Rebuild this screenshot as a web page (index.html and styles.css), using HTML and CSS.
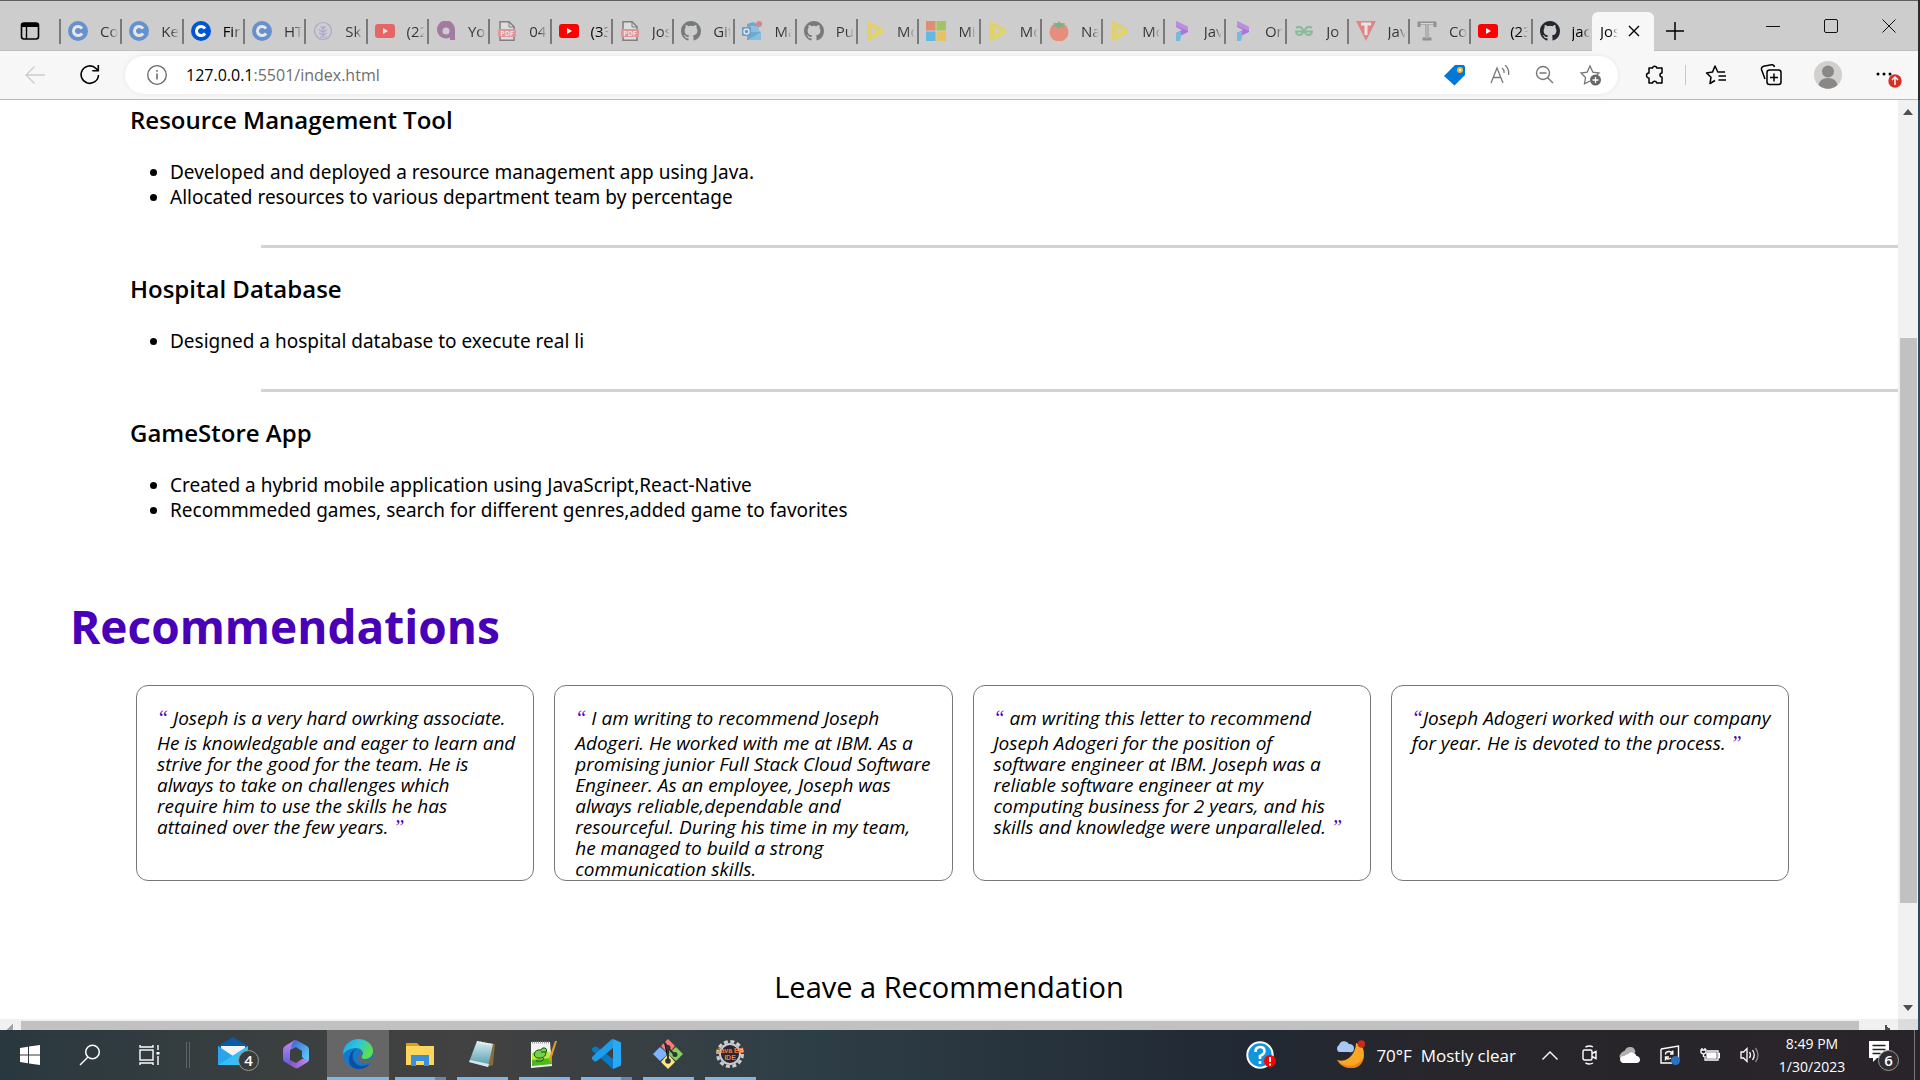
FILE: index.html
```html
<!DOCTYPE html>
<html lang="en">
<head>
<meta charset="utf-8">
<title>Joseph Adogeri</title>
<link rel="stylesheet" href="styles.css">
</head>
<body>
<svg class="defs" aria-hidden="true">
  <defs>
    <symbol id="i-c" viewBox="0 0 20 20"><circle cx="10" cy="10" r="10" fill="#0056d2"/><path d="M14 7.6A4.6 4.6 0 1 0 14 12.4" fill="none" stroke="#fff" stroke-width="3"/></symbol>
    <symbol id="i-tree" viewBox="0 0 20 20" fill="none" stroke="#8f7fd0"><circle cx="10" cy="10" r="8.5" stroke-width="1.2"/><path d="M10 16V5M10 8L7.500 5.500M10 8l2.500-2.500M10 11.500L6 8.500M10 11.500l4-3M10 14l-4-2M10 14l4-2M7 16h6" stroke-width="1.200"/></symbol>
    <symbol id="i-yt" viewBox="0 0 20 20"><rect y="3" width="20" height="14" rx="3" fill="#f00"/><path d="M8 7l5 3-5 3z" fill="#fff"/></symbol>
    <symbol id="i-a" viewBox="0 0 20 20"><path d="M19 19h-5v-2.500A9 9 0 1 1 19 9z" fill="#7a2a78"/><circle cx="10" cy="10" r="3.500" fill="#ccc"/></symbol>
    <symbol id="i-pdf" viewBox="0 0 20 20"><path d="M3 .8h9l5 5V19.200H3z" fill="#eee" stroke="#333" stroke-width="1.500"/><path d="M12 1v5h5" fill="none" stroke="#333"/><rect x="1" y="8" width="18" height="8" rx="1.500" fill="#f0606a"/><text x="10" y="14.500" class="pdf">PDF</text></symbol>
    <symbol id="i-gh" viewBox="0 0 16 16"><path fill="#24292f" d="M8 0C3.580 0 0 3.580 0 8c0 3.540 2.290 6.530 5.470 7.590.4.070.550-.170.550-.380 0-.190-.010-.820-.010-1.490-2.010.370-2.530-.490-2.690-.940-.090-.230-.480-.940-.820-1.130-.280-.150-.680-.520-.010-.530.630-.010 1.080.580 1.230.820.720 1.210 1.870.870 2.330.660.070-.520.280-.870.510-1.070-1.780-.200-3.640-.890-3.640-3.950 0-.870.310-1.590.820-2.150-.080-.200-.360-1.020.080-2.120 0 0 .670-.210 2.200.820a7.600 7.600 0 0 1 4 0c1.530-1.040 2.200-.820 2.200-.820.440 1.100.160 1.920.080 2.120.510.560.820 1.270.820 2.150 0 3.070-1.870 3.750-3.650 3.950.290.250.540.730.540 1.480 0 1.070-.010 1.930-.010 2.200 0 .210.150.460.550.380A8 8 0 0 0 16 8c0-4.420-3.580-8-8-8z"/></symbol>
    <symbol id="i-out" viewBox="0 0 20 20"><path d="M5 3l6-2 6 3v6l2 1v8H5z" fill="#1784d8"/><path d="M8 5h9v6H8z" fill="#50b0f0"/><path d="M6 19l13-8v8z" fill="#35b8f1"/><rect y="6" width="9" height="9" rx="1" fill="#0f6cbd"/><circle cx="4.500" cy="10.500" r="2.500" fill="none" stroke="#fff" stroke-width="1.400"/><circle cx="17" cy="3" r="3" fill="#e0404a"/></symbol>
    <symbol id="i-d" viewBox="0 0 20 20"><path fill-rule="evenodd" d="M2 0l5 2 11 6v4L7 18l-5 2zM7 6v8l6-4z" fill="#f4d415"/><path d="M2 20l5-6 6-4 5-2v4L7 18z" fill="#f0e000"/></symbol>
    <symbol id="i-ms" viewBox="0 0 20 20"><path d="M0 0h9.500v9.500H0z" fill="#f25022"/><path d="M10.500 0H20v9.500h-9.500z" fill="#7fba00"/><path d="M0 10.500h9.500V20H0z" fill="#00a4ef"/><path d="M10.500 10.500H20V20h-9.500z" fill="#ffb900"/></symbol>
    <symbol id="i-tom" viewBox="0 0 20 20"><circle cx="10" cy="11" r="9.500" fill="#ff4f2e"/><path d="M10 0l1.500 2.500 5-.5-3 2 2 2.500-4-1L9 8 7.500 5.500 3 6l3-2.500L4 1.500l4.500 1z" fill="#1f9d45"/></symbol>
    <symbol id="i-p" viewBox="0 0 20 20"><path d="M4 0l12 6v5L4 17v-5l6-3-6-3z" fill="#8a1ee8"/><path d="M4 0l12 6v4L4 5z" fill="#aa50f5"/><path d="M4 12l5-2v6l-1 4H4z" fill="#25a9f0"/></symbol>
    <symbol id="i-gfg" viewBox="0 0 20 20" fill="none" stroke="#45a860" stroke-width="2"><path d="M2 6.500C7 5 9 7 9 10.500a3.500 3.500 0 0 1-7 0h16a3.500 3.500 0 0 1-7 0C11 7 13 5 18 6.500"/></symbol>
    <symbol id="i-tri" viewBox="0 0 20 20"><path d="M0 0h20L10 20z" fill="#fa3e3e"/><path d="M5 3h10M10 3v11" stroke="#fff" stroke-width="3"/></symbol>
    <symbol id="i-t" viewBox="0 0 20 20"><path d="M2 6V2h16v4M10 2v16M5.500 18h9" fill="none" stroke="#555" stroke-width="3"/><path d="M3.500 2.500h13M10 3v14.500" stroke="#ddd"/></symbol>
  </defs>
</svg>

<header class="chrome">
  <div class="tabs">
    <button class="icon-btn tabmenu" aria-label="Tab actions"><svg width="20" height="20" viewBox="0 0 20 20"><rect x="1.500" y="2" width="17" height="16" rx="2.500" fill="none" stroke="#000" stroke-width="1.600"/><path d="M1.500 2h17v4h-17z"/><path d="M6.500 5v13" stroke="#000" stroke-width="1.400"/></svg></button>
    <nav class="tablist">
      <a href="#" class="tab"><svg><use href="#i-c"/></svg><span>Co</span></a>
      <a href="#" class="tab"><svg><use href="#i-c"/></svg><span>Ke</span></a>
      <a href="#" class="tab awake"><svg><use href="#i-c"/></svg><span>Fir</span></a>
      <a href="#" class="tab"><svg><use href="#i-c"/></svg><span>HT</span></a>
      <a href="#" class="tab"><svg><use href="#i-tree"/></svg><span>Sk</span></a>
      <a href="#" class="tab"><svg><use href="#i-yt"/></svg><span>(22</span></a>
      <a href="#" class="tab"><svg><use href="#i-a"/></svg><span>Yo</span></a>
      <a href="#" class="tab"><svg><use href="#i-pdf"/></svg><span>04</span></a>
      <a href="#" class="tab awake"><svg><use href="#i-yt"/></svg><span>(33</span></a>
      <a href="#" class="tab"><svg><use href="#i-pdf"/></svg><span>Jos</span></a>
      <a href="#" class="tab"><svg><use href="#i-gh"/></svg><span>Git</span></a>
      <a href="#" class="tab"><svg><use href="#i-out"/></svg><span>Ma</span></a>
      <a href="#" class="tab"><svg><use href="#i-gh"/></svg><span>Pu</span></a>
      <a href="#" class="tab"><svg><use href="#i-d"/></svg><span>Mo</span></a>
      <a href="#" class="tab"><svg><use href="#i-ms"/></svg><span>Mi</span></a>
      <a href="#" class="tab"><svg><use href="#i-d"/></svg><span>Mo</span></a>
      <a href="#" class="tab"><svg><use href="#i-tom"/></svg><span>Na</span></a>
      <a href="#" class="tab"><svg><use href="#i-d"/></svg><span>Mo</span></a>
      <a href="#" class="tab"><svg><use href="#i-p"/></svg><span>Jav</span></a>
      <a href="#" class="tab"><svg><use href="#i-p"/></svg><span>On</span></a>
      <a href="#" class="tab"><svg><use href="#i-gfg"/></svg><span>Jo</span></a>
      <a href="#" class="tab"><svg><use href="#i-tri"/></svg><span>Jav</span></a>
      <a href="#" class="tab"><svg><use href="#i-t"/></svg><span>Co</span></a>
      <a href="#" class="tab awake"><svg><use href="#i-yt"/></svg><span>(23</span></a>
      <a href="#" class="tab awake"><svg><use href="#i-gh"/></svg><span>jac</span></a>
    </nav>
    <div class="tab-active"><span>Jos</span><button class="icon-btn" aria-label="Close tab"><svg width="12" height="12" viewBox="0 0 12 12"><path d="M1 1l10 10M11 1L1 11" stroke="#000" stroke-width="1.400"/></svg></button></div>
    <button class="icon-btn newtab" aria-label="New tab"><svg width="18" height="18" viewBox="0 0 18 18"><path d="M9 0v18M0 9h18" stroke="#000" stroke-width="1.500"/></svg></button>
    <div class="wincontrols">
      <button class="icon-btn" aria-label="Minimize"><svg width="14" height="14" viewBox="0 0 14 14"><path d="M0 7.500h14" stroke="#111"/></svg></button>
      <button class="icon-btn" aria-label="Maximize"><svg width="14" height="14" viewBox="0 0 14 14"><rect x=".5" y=".5" width="13" height="13" rx="1.500" fill="none" stroke="#111"/></svg></button>
      <button class="icon-btn" aria-label="Close"><svg width="14" height="14" viewBox="0 0 14 14"><path d="M.5.500l13 13M13.500.500l-13 13" stroke="#111"/></svg></button>
    </div>
  </div>

  <div class="toolbar">
    <button class="icon-btn back" aria-label="Back"><svg width="20" height="18" viewBox="0 0 20 18" fill="none" stroke="#ccc" stroke-width="1.300"><path d="M20 9H1M9.500.500L1 9l8.500 8.500"/></svg></button>
    <button class="icon-btn reload" aria-label="Refresh"><svg width="20" height="20" viewBox="0 0 20 20" fill="none" stroke="#000" stroke-width="1.600"><path d="M18.500 10a8.700 8.700 0 1 1-2.500-6.500L18 5.500M18.300 0v5.700h-6"/></svg></button>
    <div class="omnibox">
      <svg width="20" height="20" viewBox="0 0 20 20" fill="none" stroke="#666" stroke-width="1.300"><circle cx="10" cy="10" r="9.300"/><path d="M10 8.500v6M10 5v1.700" stroke-width="1.500"/></svg>
      <a class="url" href="#"><b>127.0.0.1</b>:5501/index.html</a>
      <button class="icon-btn" aria-label="Shopping"><svg width="22" height="22" viewBox="0 0 22 22"><path d="M11 1h8.500L21 2.500V11L10.500 21.500 0 12z" fill="#0078d7"/><circle cx="16" cy="6" r="3" fill="#f5b82e"/><circle cx="16" cy="6" r="1.200" fill="#fff"/></svg></button>
      <button class="icon-btn" aria-label="Read aloud"><svg width="20" height="20" viewBox="0 0 20 20" fill="none" stroke="#777" stroke-width="1.300"><path d="M1 18L7 3l6 15M3.300 12.500h7.400M12 3q2.500 2 2 5M15 0q4.500 4 3.500 10"/></svg></button>
      <button class="icon-btn" aria-label="Zoom out"><svg width="20" height="20" viewBox="0 0 20 20" fill="none" stroke="#777" stroke-width="1.400"><circle cx="8" cy="8" r="6.500"/><path d="M4.500 8h7M12.700 12.700L18 18"/></svg></button>
      <button class="icon-btn" aria-label="Add to favorites"><svg width="22" height="22" viewBox="0 0 22 22" fill="none" stroke="#777" stroke-width="1.300"><path d="M11 17l-5.500 2.800 1-6.300L2 9l6.200-.9L11 2l2.800 6.100L20 9l-2 2"/><circle cx="16.500" cy="16" r="5.500" fill="#666" stroke="none"/><path d="M16.500 13v6M13.500 16h6" stroke="#fff"/></svg></button>
    </div>
    <button class="icon-btn ext" aria-label="Extensions"><svg width="20" height="20" viewBox="0 0 20 20" fill="none" stroke="#000" stroke-width="1.500"><path d="M4 3h3.500a2.200 2.200 0 0 1 4.300 0H17v5a2 2 0 0 0 0 4v6h-5.200a2.200 2.200 0 0 0-4.300 0H4v-5a2.300 2.300 0 1 1 0-5z" stroke-linejoin="round"/></svg></button>
    <i class="sep"></i>
    <button class="icon-btn fav" aria-label="Favorites"><svg width="22" height="20" viewBox="0 0 22 20" fill="none" stroke="#000" stroke-width="1.500" stroke-linejoin="round"><path d="M10 15.500L5 18.500l1-6.300L1.500 8l6-.9L10 1l2.800 6H20M13.500 11H21M13.500 15H21"/></svg></button>
    <button class="icon-btn coll" aria-label="Collections"><svg width="22" height="22" viewBox="0 0 22 22" fill="none" stroke="#000" stroke-width="1.500"><path d="M5 15L1.500 5.500Q1 3 3.500 2.200l8-1.400Q14 .5 14.500 3"/><rect x="7" y="6" width="14" height="14.500" rx="2.500"/><path d="M14 9.500v8M10 13.500h8"/></svg></button>
    <button class="icon-btn prof" aria-label="Profile"><svg width="28" height="28" viewBox="0 0 28 28"><circle cx="14" cy="14" r="14" fill="#d2d0ce"/><circle cx="14" cy="10.500" r="6" fill="#8a8886"/><path d="M4.500 24q1.500-7 9.500-7t9.500 7Q14 31.500 4.500 24z" fill="#8a8886"/></svg></button>
    <button class="icon-btn more" aria-label="Settings and more"><svg width="28" height="28" viewBox="0 0 28 28"><circle cx="3" cy="13" r="1.500"/><circle cx="9" cy="13" r="1.500"/><circle cx="15" cy="13" r="1.500"/><circle cx="20" cy="20" r="6.700" fill="#d93025"/><path d="M20 24v-7.500M17 19l3-3 3 3" fill="none" stroke="#fff" stroke-width="1.400"/></svg></button>
  </div>
</header>

<div class="view">
  <main class="page">
    <section class="projects">
      <h3>Resource Management Tool</h3>
      <ul><li>Developed and deployed a resource management app using Java.</li><li>Allocated resources to various department team by percentage</li></ul>
      <hr>
      <h3>Hospital Database</h3>
      <ul><li>Designed a hospital database to execute real li</li></ul>
      <hr>
      <h3>GameStore App</h3>
      <ul><li>Created a hybrid mobile application using JavaScript,React-Native</li><li>Recommmeded games, search for different genres,added game to favorites</li></ul>
    </section>
    <h1>Recommendations</h1>
    <section class="cards">
      <p class="card"><span class="open">“</span> Joseph is a very hard owrking associate.<br>He is knowledgable and eager to learn and<br>strive for the good for the team. He is<br>always to take on challenges which<br>require him to use the skills he has<br>attained over the few years. <span class="close">”</span></p>
      <p class="card"><span class="open">“</span> I am writing to recommend Joseph<br>Adogeri. He worked with me at IBM. As a<br>promising junior Full Stack Cloud Software<br>Engineer. As an employee, Joseph was<br>always reliable,dependable and<br>resourceful. During his time in my team,<br>he managed to build a strong<br>communication skills.</p>
      <p class="card"><span class="open">“</span> am writing this letter to recommend<br>Joseph Adogeri for the position of<br>software engineer at IBM. Joseph was a<br>reliable software engineer at my<br>computing business for 2 years, and his<br>skills and knowledge were unparalleled. <span class="close">”</span></p>
      <p class="card"><span class="open">“</span>Joseph Adogeri worked with our company<br>for year. He is devoted to the process. <span class="close">”</span></p>
    </section>
    <h2>Leave a Recommendation</h2>
  </main>
  <div class="vbar"><i class="up"></i><i class="vthumb"></i><i class="down"></i></div>
  <div class="hbar"><i class="left"></i><i class="hthumb"></i><i class="right"></i></div>
  <div class="corner"></div>
</div>

<footer class="taskbar">
  <button class="sys" aria-label="Start"><svg width="20" height="20" viewBox="0 0 20 20" fill="#fff"><path d="M0 3l8-1.200v7.700H0zM9 1.600L20 0v9.500H9zM0 10.500h8v7.700L0 17zM9 10.500h11V20L9 18.400z"/></svg></button>
  <button class="sys" aria-label="Search"><svg width="22" height="22" viewBox="0 0 22 22" fill="none" stroke="#fff" stroke-width="1.500"><circle cx="13.500" cy="8" r="6.800"/><path d="M9 13L1 21"/></svg></button>
  <button class="sys" aria-label="Task view"><svg width="22" height="20" viewBox="0 0 22 20" fill="none" stroke="#fff" stroke-width="1.400"><rect x="1" y="5" width="13" height="10"/><path d="M1 0v2h13V0M1 20v-2h13v2M19 0v5M19 11v9"/><path d="M17.500 7h3v2.500h-3z" fill="#fff" stroke="none"/></svg></button>
  <i class="divider"></i>
  <button class="app mail" aria-label="Mail"><svg width="42" height="36" viewBox="0 0 42 36"><path d="M1 10L16 1l15 9v19H1z" fill="#0c59a4"/><path d="M4 10h24v12H4z" fill="#f3f3f3"/><path d="M1 10l15 10L31 10v19H1z" fill="#2aa5ec"/><path d="M1 29L31 10v19z" fill="#35c0f5"/><circle cx="31.500" cy="24.500" r="10" fill="#3b3b3b" stroke="#999"/><text x="31.500" y="29.500" class="badge">4</text></svg></button>
  <button class="app idle" aria-label="Microsoft 365"><svg width="28" height="30" viewBox="0 0 28 30"><defs><linearGradient id="m1" x1="0" y1="0" x2="0" y2="1"><stop offset="0" stop-color="#c58af0"/><stop offset="1" stop-color="#5a5fd8"/></linearGradient><linearGradient id="m2" x1="0" y1="0" x2="1" y2="1"><stop offset="0" stop-color="#3f62d0"/><stop offset="1" stop-color="#5ad8fb"/></linearGradient><linearGradient id="m3" x1="0" y1="0" x2="1" y2="0"><stop offset="0" stop-color="#7b50b8"/><stop offset="1" stop-color="#c58af0"/></linearGradient></defs><path d="M13 1L3 7Q1 8.500 1 11v9q0 2 2 3l5 3V12q0-1.500 2-2.500l4-2.500z" fill="url(#m1)"/><path d="M12 2q2-1.500 4 0l9 5q2 1 2 4v9q0 2-2 3l-5-5v-6l-6-4-4 2q-2-4 2-8z" fill="url(#m2)"/><path d="M6 25l7 4q1.500.700 3 0l9-5.500q2-1.500 2-3.500H20l-6 4-6-3q-1 3-2 4z" fill="url(#m3)"/></svg></button>
  <button class="app current" aria-label="Microsoft Edge"><svg width="30" height="30" viewBox="0 0 30 30"><defs><linearGradient id="eg" x1="0" y1="0" x2="1" y2=".5"><stop offset="0" stop-color="#1a9fe8"/><stop offset=".5" stop-color="#30c5d8"/><stop offset="1" stop-color="#60e048"/></linearGradient></defs><circle cx="15" cy="15" r="15" fill="#1379cf"/><path d="M0 14C1 5 8 0 15 0c9 0 15 6 15 12 0 5-4 8-8 8-3 0-4-2-3-3 3-4-1-8-6-8C6 9 1 13 0 16z" fill="url(#eg)"/><path d="M14 9.500C8 13 8 22 15 26c5 2 10 0 12-2-4 7-14 8-19 3C4 22 6 12 14 9.500z" fill="#0e4f9c"/><path d="M18 12c3 3-1 4 0 7 2 3 7 3 10 .500 1 1 0 3-1 4-7 4-13-1-12-6 .5-2 2-3 3-5.500z" fill="#666"/></svg></button>
  <button class="app multi" aria-label="File Explorer"><svg width="28" height="24" viewBox="0 0 28 24"><path d="M0 1h11l3 3v4H0z" fill="#e59b12"/><path d="M0 4h28v19H0z" fill="#ffd65c"/><path d="M5 24V13h18v11h-5v-5h-8v5z" fill="#3b90dc"/></svg></button>
  <button class="app" aria-label="Notepad"><svg width="28" height="28" viewBox="0 0 28 28"><defs><linearGradient id="np" x1="0" y1="0" x2="0" y2="1"><stop offset="0" stop-color="#d8f0f2"/><stop offset="1" stop-color="#4f96a8"/></linearGradient></defs><path d="M23 3l4 1-2 21-6 2z" fill="#8a6a3a"/><path d="M9 1l16 3-5 23L1 22z" fill="url(#np)"/><path d="M1 22l19 5 1-3L2 20z" fill="#d8e6ea"/><path d="M9 2l15 3" stroke="#eee" stroke-width="2" stroke-dasharray="2 1"/></svg></button>
  <button class="app" aria-label="Notepad++"><svg width="28" height="28" viewBox="0 0 28 28"><path d="M1 2h19l2 24-21 2z" fill="#f2f2f2"/><path d="M2 13q9-4 18-1l1 12-19 2z" fill="#b8ec3a"/><path d="M2 20l19-2 1 6-20 2z" fill="#4fb81f"/><path d="M4 14q2-5 7-4 1-3 4-2t1 4q0 5-5 6-6 1-7-4zM6 21h6l2-3M11 12h5" fill="#74d147" stroke="#174a17" stroke-width="1"/><path d="M2 2.500h18" stroke="#999" stroke-width="2" stroke-dasharray="1 1"/><path d="M27 1l-6 19-2 2v-4L25 1z" fill="#e89b24"/></svg></button>
  <button class="app multi" aria-label="Visual Studio Code"><svg width="30" height="30" viewBox="0 0 30 30"><path d="M22 0l8 3.500v23L22 30 1 11.500v-2L3.500 7.500 6 8l16 12z" fill="#0879c6"/><path d="M22 9L6 22l-2.500.5L1 20v-2L21 0l1 1z" fill="#1f9ce8"/><path d="M22 0l8 3.500v23L22 30z" fill="#2aa9f5"/></svg></button>
  <button class="app" aria-label="Git Bash"><svg width="30" height="30" viewBox="0 0 30 30"><path d="M15 0l7 7-7 8-7-8z" fill="#ff7a7a"/><path d="M0 15l7-7 8 7-8 7z" fill="#80b3ff"/><path d="M30 15l-7-7-8 7 8 7z" fill="#84d05a"/><path d="M15 30l7-7-7-8-7 8z" fill="#ffe680"/><path d="M11 3l4 5v15M15 9l7 7" stroke="#333" stroke-width="2"/><circle cx="15" cy="8.500" r="2.500" fill="#333"/><circle cx="15" cy="22" r="2.800" fill="#333"/><circle cx="22" cy="15.500" r="2.500" fill="#333"/></svg></button>
  <button class="app" aria-label="Eclipse"><svg width="30" height="30" viewBox="0 0 30 30"><circle cx="15" cy="15" r="12.500" fill="none" stroke="#ccc" stroke-width="3" stroke-dasharray="4 2.540"/><circle cx="15" cy="15" r="10" fill="#2b2438" stroke="#ccc" stroke-width="2"/><text x="15" y="14" class="ee">Java EE</text><text x="15" y="21" class="ee">IDE</text></svg></button>

  <div class="tray">
    <button class="help" aria-label="Help"><svg width="30" height="28" viewBox="0 0 30 28"><circle cx="14" cy="14" r="12.700" fill="#1296db" stroke="#fff" stroke-width="2"/><path d="M9.500 11q0-5 4.500-5t4.500 4q0 3-4.500 5v3M14 20v3" fill="none" stroke="#fff" stroke-width="2.600"/><circle cx="24" cy="20" r="6" fill="#f00"/><path d="M24 16v5M24 22.500v2" stroke="#fff" stroke-width="2"/></svg></button>
    <button class="weather"><svg width="30" height="30" viewBox="0 0 30 30"><path d="M21 3q9 3 8 13-2 12-13 12-9 0-14-8 7 2 12-2 7-6 7-15z" fill="#f9a825"/><path d="M2 20q8 8 18 5 8-4 9-10-1 13-13 13-9 0-14-8z" fill="#ee7d1b"/><path d="M4 12a4 4 0 0 1 0-7 5.500 5.500 0 0 1 10-1q5 0 5 4.500T14 12z" fill="#a9c8f5"/><circle cx="26.500" cy="4" r="3.800" fill="#c92a1c"/></svg><span>70°F&nbsp; Mostly clear</span></button>
    <button class="tri" aria-label="Show hidden icons"><svg width="16" height="9" viewBox="0 0 16 9" fill="none" stroke="#fff" stroke-width="1.400"><path d="M.5 8.500L8 1l7.500 7.500"/></svg></button>
    <button class="tri" aria-label="Meet now"><svg width="16" height="20" viewBox="0 0 16 20" fill="none" stroke="#fff" stroke-width="1.400"><rect x="1" y="5" width="9" height="10" rx="1.500"/><path d="M10 8.500l4-2v7l-4-2M3.500 2q4-2 7.500 0M3.500 18q4 2 7.500 0"/></svg></button>
    <button class="tri" aria-label="OneDrive"><svg width="22" height="18" viewBox="0 0 22 18"><path d="M2 13Q-1 10 2 7.500 3 5 5.500 5q2-4.500 6-4 4 0 5 5l-8 7z" fill="#b0b0b0"/><path d="M4 17q-3-1-3-4 .5-3 4-3l4-2q3-3 6-1 2 1 2.500 3 3 .3 3.500 3.500 0 3-3 3.500z" fill="#fff"/></svg></button>
    <button class="tri" aria-label="Security"><svg width="20" height="20" viewBox="0 0 20 20" fill="none" stroke="#fff" stroke-width="1.400"><path d="M1 4L18.500 1v13M1 4v14h11M5.500 9.500q0-3 3.500-3t3.500 2.500M12.800 5.500V9H10M5.500 15.500V12H9M6 13q2 2 5 0"/><circle cx="15.500" cy="15.500" r="4.500" fill="#2b72c4" stroke="none"/></svg></button>
    <button class="tri" aria-label="Battery"><svg width="20" height="16" viewBox="0 0 20 16" fill="none" stroke="#fff" stroke-width="1.300"><path d="M7 4h11v9H5V9M18 6.500h1.500v4H18M1 3h5v2.500q-2.500 3-5 0zM2 1v2M5 1v2M3.500 7v3"/><path d="M7 6h9v5H7z" fill="#fff"/></svg></button>
    <button class="tri" aria-label="Volume"><svg width="20" height="18" viewBox="0 0 20 18" fill="none" stroke="#fff" stroke-width="1.300"><path d="M1 6h2.500L7 2.500v13L3.500 12H1zM9.500 6q2 3 0 6M12.500 4q3.500 5 0 10"/><path d="M15.500 2q5 7 0 14" stroke="#888"/></svg></button>
    <button class="clock"><span>8:49 PM</span><span>1/30/2023</span></button>
    <button class="notif" aria-label="Notifications"><svg width="32" height="34" viewBox="0 0 32 34"><path d="M1 3h20v17H9l-4 4v-4H1z" fill="#fff"/><path d="M4.500 7.500h13M4.500 11.500h13M4.500 15.500h8" stroke="#222" stroke-width="1.300"/><circle cx="20.500" cy="22.500" r="10" fill="#2f2d30" stroke="#999"/><text x="20.500" y="27.500" class="badge">6</text></svg></button>
    <i class="edge"></i>
  </div>
</footer>
</body>
</html>
```
FILE: styles.css
```css
* { box-sizing: border-box; }
body { margin: 0; height: 100vh; display: flex; flex-direction: column; overflow: hidden; background: #fff; color: #000; font-family: "Open Sans", "Noto Sans", sans-serif; }
button { border: 0; padding: 0; background: none; font: inherit; color: inherit; }
.defs { display: none; }
.icon-btn { display: flex; align-items: center; justify-content: center; flex: none; }
.pdf { font: bold 7px "Open Sans", sans-serif; fill: #fff; text-anchor: middle; }
.badge { font: 600 15px "Open Sans", sans-serif; fill: #fff; text-anchor: middle; }
.ee { font: bold 7px "Liberation Sans", sans-serif; fill: #f08030; text-anchor: middle; }

/* browser chrome */
.chrome { flex: none; border-right: 2px solid #2b2b2b; }
.tabs { display: flex; height: 51px; padding-top: 11px; background: #cdcdcd; border-top: 1px solid #605e60; border-bottom: 1px solid #bdbdbd; }
.tabmenu { width: 59px; height: 38px; }
.tablist { display: flex; flex: 0 1 1533px; min-width: 0; align-items: center; height: 38px; }
.tab { flex: 1 1 0; min-width: 0; height: 25px; display: flex; align-items: center; padding-left: 7px; border-left: 2px solid #7a7a7a; color: #000; font-size: 15px; text-decoration: none; }
.tab svg { width: 20px; height: 20px; flex: none; opacity: .5; }
.tab span { flex: none; width: 18px; margin-left: 12px; overflow: hidden; white-space: nowrap; opacity: .75; -webkit-mask-image: linear-gradient(90deg, #000 55%, transparent); mask-image: linear-gradient(90deg, #000 55%, transparent); }
.tab.awake svg, .tab.awake span { opacity: 1; }
.tab-active { flex: none; width: 62px; height: 39px; padding: 0 14px 2px 8px; display: flex; align-items: center; justify-content: space-between; background: #f7f7f7; border-radius: 6px 6px 0 0; font-size: 15px; }
.tab-active span { width: 18px; overflow: hidden; -webkit-mask-image: linear-gradient(90deg, #000 55%, transparent); mask-image: linear-gradient(90deg, #000 55%, transparent); }
.newtab { width: 42px; height: 38px; }
.wincontrols { display: flex; margin-left: auto; height: 28px; }
.wincontrols .icon-btn { width: 58px; }
.toolbar { display: flex; align-items: center; height: 49px; background: #f7f7f7; border-bottom: 1px solid #b9b9b9; }
.back { width: 60px; padding-left: 10px; }
.reload { width: 60px; }
.omnibox { display: flex; align-items: center; flex: 1; height: 38px; margin-left: 5px; padding: 0 16px 0 22px; border-radius: 19px; background: #fff; box-shadow: 0 0 4px #e4e4e4; }
.omnibox .icon-btn { width: 24px; margin-left: 21px; }
.omnibox > svg { flex: none; }
.url { flex: 1; margin-left: 19px; font-size: 16px; color: #6e6e6e; text-decoration: none; }
.url b { font-weight: 400; color: #000; }
.ext { width: 60px; margin-left: 7px; }
.sep { width: 1px; height: 20px; background: #c9c9c9; }
.fav { width: 60px; }
.coll { width: 50px; }
.prof { width: 64px; }
.more { width: 58px; }

/* scrolled document */
.view { flex: 1; min-height: 0; display: grid; grid-template: minmax(0, 1fr) 11px / minmax(0, 1fr) 20px; border-right: 2px solid #2c4a63; overflow: hidden; }
.page { overflow: hidden; padding-top: 6px; }
.projects { padding-left: 130px; }
h3 { margin: 0 0 26px; font-size: 24px; line-height: 28px; font-weight: 600; }
ul { margin: 0; padding-left: 40px; font: 19px/25px "Noto Sans", sans-serif; }
hr { margin: 35px 0 27px 131px; height: 3px; border: 0; background: #d3d3d3; }
h1 { margin: 73px 0 29px 70px; font-size: 46px; line-height: 60px; font-weight: 700; color: #4800b8; }
.cards { display: grid; grid-template-columns: repeat(4, minmax(0, 1fr)); gap: 20px; padding: 0 109px 0 136px; }
.card { height: 196px; margin: 0; padding: 18px 0 0 20px; border: 1px solid #777; border-radius: 12px; font-size: 19px; line-height: 21px; font-style: italic; white-space: nowrap; }
.open, .close { font-family: "Liberation Serif", serif; font-size: 20px; color: #4800b8; }
.open { line-height: 29px; }
h2 { margin: 86px 0 0; font-size: 29px; line-height: 40px; font-weight: 400; text-align: center; }

.vbar { display: flex; flex-direction: column; align-items: center; background: #f1f1f1; padding: 9px 0 8px; }
.up { border: 5px solid transparent; border-top: 0; border-bottom: 6px solid #505050; }
.down { border: 5px solid transparent; border-bottom: 0; border-top: 6px solid #505050; margin-top: auto; }
.vthumb { width: 17px; height: 565px; margin-top: 223px; background: #c1c1c1; }
.hbar { display: flex; align-items: flex-end; background: #f1f1f1; padding-top: 2px; }
.left { width: 6px; height: 6px; margin: 0 8px 0 7px; background: linear-gradient(135deg, transparent 50%, #a3a3a3 50%); }
.hthumb { flex: 1; align-self: stretch; background: #c1c1c1; }
.right { width: 6px; height: 6px; margin: 0 7px 0 26px; background: linear-gradient(45deg, #505050 50%, transparent 50%); }
.corner { background: #dcdcdc; }

/* taskbar */
.taskbar { flex: none; display: flex; height: 50px; color: #fff; background: linear-gradient(90deg, #29383e, #3f4141 18%, #434141 24%, #2e3e46 42%, #212934 64%, #27262b 75%, #292429); }
.taskbar button { display: flex; align-items: center; justify-content: center; flex: none; }
.sys { width: 60px; }
.divider { width: 4px; height: 26px; margin: 12px 13px 0 6px; border: 1px solid #5d6568; border-width: 0 1px; }
.taskbar .app { width: 62px; padding-bottom: 3px; background: linear-gradient(#76b9ed, #76b9ed) no-repeat center bottom / 51px 3px; }
.app svg { flex: none; }
.taskbar .idle, .taskbar .mail { background: none; }
.taskbar .mail { padding-left: 8px; }
.taskbar .current { background: linear-gradient(#76b9ed, #76b9ed) no-repeat center bottom / 62px 3px, #666; }
.taskbar .multi { background: linear-gradient(90deg, #76b9ed 40px, #5b8cb5 40px) no-repeat center bottom / 51px 3px; }
.tray { display: flex; margin-left: auto; }
.help { width: 40px; margin-right: 54px; }
.weather { gap: 11px; margin-right: 14px; font-size: 17px; white-space: nowrap; }
.weather svg { flex: none; }
.tri { width: 40px; }
.clock { width: 84px; flex-direction: column; font-size: 14px; line-height: 23px; }
.notif { width: 50px; padding-left: 10px; }
.edge { width: 1px; margin: 0 5px 0 10px; background: #77777a; }
```
